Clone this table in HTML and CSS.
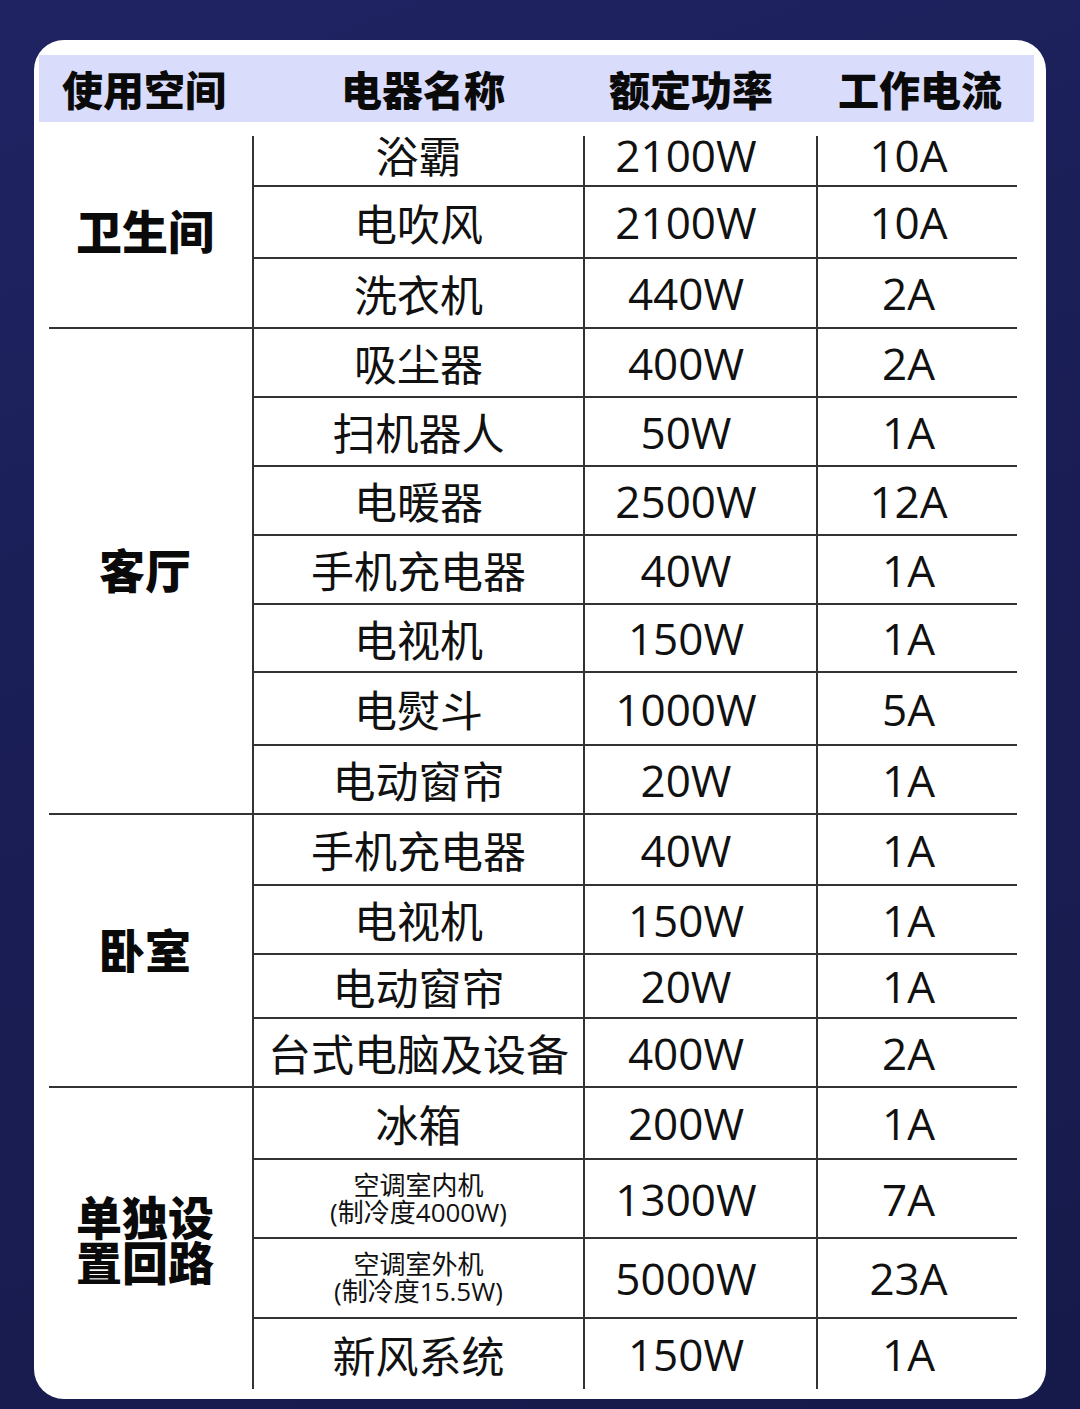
FILE: index.html
```html
<!DOCTYPE html>
<html lang="zh-CN">
<head>
<meta charset="utf-8">
<title>电器功率表</title>
<link rel="stylesheet" href="styles.css">
</head>
<body>
<div class="card">
  <div class="head">
    <div class="h h1">使用空间</div>
    <div class="h h2">电器名称</div>
    <div class="h h3">额定功率</div>
    <div class="h h4">工作电流</div>
  </div>
  <div class="table">
    <div class="grp g3">卫生间</div>
    <div class="c name first">浴霸</div><div class="c pw first">2100W</div><div class="c cur first">10A</div>
    <div class="c name">电吹风</div><div class="c pw">2100W</div><div class="c cur">10A</div>
    <div class="c name">洗衣机</div><div class="c pw">440W</div><div class="c cur">2A</div>

    <div class="grp g7">客厅</div>
    <div class="c name">吸尘器</div><div class="c pw">400W</div><div class="c cur">2A</div>
    <div class="c name">扫机器人</div><div class="c pw">50W</div><div class="c cur">1A</div>
    <div class="c name">电暖器</div><div class="c pw">2500W</div><div class="c cur">12A</div>
    <div class="c name">手机充电器</div><div class="c pw">40W</div><div class="c cur">1A</div>
    <div class="c name">电视机</div><div class="c pw">150W</div><div class="c cur">1A</div>
    <div class="c name">电熨斗</div><div class="c pw">1000W</div><div class="c cur">5A</div>
    <div class="c name">电动窗帘</div><div class="c pw">20W</div><div class="c cur">1A</div>

    <div class="grp g4">卧室</div>
    <div class="c name">手机充电器</div><div class="c pw">40W</div><div class="c cur">1A</div>
    <div class="c name">电视机</div><div class="c pw">150W</div><div class="c cur">1A</div>
    <div class="c name">电动窗帘</div><div class="c pw">20W</div><div class="c cur">1A</div>
    <div class="c name">台式电脑及设备</div><div class="c pw">400W</div><div class="c cur">2A</div>

    <div class="grp g4 last"><span class="ln">单独设</span><span class="ln">置回路</span></div>
    <div class="c name">冰箱</div><div class="c pw">200W</div><div class="c cur">1A</div>
    <div class="c name small"><span class="ln">空调室内机</span><span class="ln">(制冷度4000W)</span></div><div class="c pw">1300W</div><div class="c cur">7A</div>
    <div class="c name small"><span class="ln">空调室外机</span><span class="ln">(制冷度15.5W)</span></div><div class="c pw">5000W</div><div class="c cur">23A</div>
    <div class="c name end">新风系统</div><div class="c pw end">150W</div><div class="c cur end">1A</div>
  </div>
</div>
</body>
</html>
```
FILE: styles.css
```css
html, body {
  margin: 0;
  padding: 0;
}
body {
  width: 1080px;
  height: 1409px;
  overflow: hidden;
  background: linear-gradient(160deg, #1f2362 0%, #1a1e55 45%, #161a4a 100%);
  font-family: "Open Sans", "Noto Sans CJK SC", sans-serif;
  color: #111;
}
.card {
  box-sizing: border-box;
  margin: 40px 34px 0 34px;
  height: 1359px;
  background: #fff;
  border-radius: 30px;
  padding: 15px 12px 10px 5px;
}
.head {
  height: 67px;
  background: #d9dcfa;
  padding-left: 10px;
  display: grid;
  grid-template-columns: 203px 331px 233px 201px;
  align-items: center;
}
.h {
  font-family: "Noto Sans CJK SC", sans-serif;
  font-weight: 900;
  font-size: 41px;
  line-height: 1;
  text-align: center;
  color: #0a0a0a;
}
.h1 { padding-right: 13px; }
.h2 { padding-left: 11px; }
.h3 { padding-right: 17px; }
.h4 { padding-left: 7px; }

.table {
  margin: 14px 0 0 10px;
  width: 968px;
  display: grid;
  grid-template-columns: 203px 331px 233px 201px;
  grid-template-rows: 51px 72px 70px 69px 69px 69px 69px 68px 73px 69px 71px 69px 64px 69px 72px 79px 80px 70px;
}
.grp {
  box-sizing: border-box;
  grid-column: 1;
  display: flex;
  flex-direction: column;
  align-items: center;
  justify-content: center;
  padding-right: 11px;
  padding-bottom: 6px;
  font-family: "Noto Sans CJK SC", sans-serif;
  font-weight: 900;
  font-size: 46px;
  line-height: 46px;
  text-align: center;
  color: #0a0a0a;
  border-bottom: 2px solid #333;
}
.g3 { grid-row: span 3; }
.g4 { grid-row: span 4; }
.g7 { grid-row: span 7; }
.grp.last { border-bottom: none; padding-bottom: 2px; }
.grp .ln { display: block; height: 45px; line-height: 45px; }

.c {
  box-sizing: border-box;
  display: flex;
  flex-direction: column;
  align-items: center;
  justify-content: center;
  text-align: center;
  border-left: 2px solid #333;
  border-bottom: 2px solid #333;
  line-height: 1;
  white-space: nowrap;
}
.c.end { border-bottom: none; }
.c.first { padding-bottom: 12px; }
.name {
  font-family: "Noto Sans CJK SC", sans-serif;
  font-size: 43px;
}
.name.small {
  font-family: "Open Sans", "Noto Sans CJK SC", sans-serif;
  font-size: 26px;
}
.name.small .ln {
  display: block;
  height: 27px;
  line-height: 27px;
}
.pw, .cur {
  font-size: 44px;
}
.pw { padding-right: 29px; }
.cur { padding-right: 18px; }
```
